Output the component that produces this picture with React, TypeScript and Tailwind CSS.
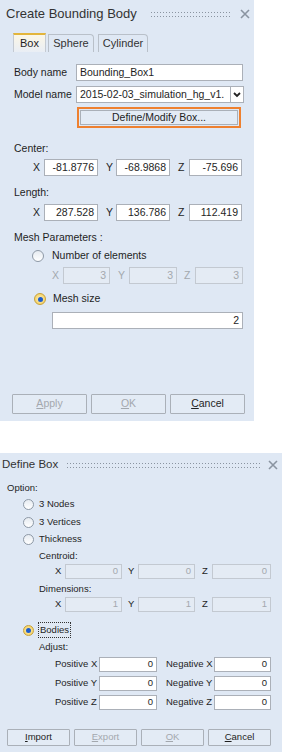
import React from 'react';

const font = "font-['Liberation_Sans',Arial,sans-serif]";

function Grip({ w }: { w: number }) {
  return (
    <svg width={w} height={7} className="shrink-0">
      <defs>
        <pattern id={`g${w}`} width="3" height="4" patternUnits="userSpaceOnUse">
          <rect x="0" y="1" width="1" height="1" fill="#8a94a1" />
        </pattern>
      </defs>
      <rect x="0" y="0" width={w} height="7" fill={`url(#g${w})`} />
    </svg>
  );
}

function CloseX() {
  return (
    <svg width="10" height="10" viewBox="0 0 10 10" className="shrink-0">
      <path d="M1 1 L9 9 M9 1 L1 9" stroke="#8a94a1" strokeWidth="1.6" />
    </svg>
  );
}

function Radio({ on, big }: { on?: boolean; big?: boolean }) {
  const size = big ? 'w-[12px] h-[12px]' : 'w-[11px] h-[11px]';
  if (on)
    return (
      <span
        className={`${size} shrink-0 rounded-full border border-[#c8a23a] bg-[radial-gradient(circle,#fff3bf,#f0c64a)] flex items-center justify-center`}
      >
        <span className="w-[5px] h-[5px] rounded-full bg-[#1d5ccc]" />
      </span>
    );
  return (
    <span
      className={`${size} shrink-0 rounded-full border border-[#8e99a6] bg-[linear-gradient(#e6ebf1,#ffffff)]`}
    />
  );
}

function Field({ v, w, h = 'h-[17px]', off }: { v: string; w: string; h?: string; off?: boolean }) {
  return (
    <div
      className={`${w} ${h} shrink-0 border flex items-center justify-end pr-[3px] ${
        off ? 'border-[#c3c9d1] bg-[#e4ebf4] text-[#a3a8ae]' : 'border-[#abb0b8] bg-white text-[#1e1e1e]'
      }`}
    >
      {v}
    </div>
  );
}

function Btn({ children, off, w, h }: { children: React.ReactNode; off?: boolean; w: string; h: string }) {
  return (
    <div
      className={`${w} ${h} border border-[#aab0b8] rounded-[1px] bg-[#e3ebf5] flex items-center justify-center ${
        off ? 'text-[#a3a8ae]' : 'text-[#1e1e1e]'
      }`}
    >
      {children}
    </div>
  );
}

function XYZ({ vals }: { vals: string[] }) {
  return (
    <div className="flex items-center h-[17px] pl-[19px]">
      <span className="w-[11px]">X</span>
      <Field v={vals[0]} w="w-[54px]" />
      <span className="ml-[8px] w-[10px]">Y</span>
      <Field v={vals[1]} w="w-[54px]" />
      <span className="ml-[8px] w-[11px]">Z</span>
      <Field v={vals[2]} w="w-[53px]" />
    </div>
  );
}

function SmallXYZ({ v }: { v: string }) {
  return (
    <div className="flex items-center h-[15px] pl-[55px]">
      <span className="w-[10px]">X</span>
      <Field v={v} w="w-[57px]" h="h-[15px]" off />
      <span className="ml-[6px] w-[10px]">Y</span>
      <Field v={v} w="w-[57px]" h="h-[15px]" off />
      <span className="ml-[7px] w-[10px]">Z</span>
      <Field v={v} w="w-[59px]" h="h-[15px]" off />
    </div>
  );
}

function AdjustRow({ axis }: { axis: string }) {
  return (
    <div className="flex items-center h-[15px] pl-[55px] mt-[4px]">
      <span className="w-[44px] whitespace-nowrap">Positive {axis}</span>
      <Field v="0" w="w-[58px]" h="h-[15px]" />
      <span className="ml-[9px] w-[48px] whitespace-nowrap">Negative {axis}</span>
      <Field v="0" w="w-[57px]" h="h-[15px]" />
    </div>
  );
}

export default function App() {
  return (
    <div className={`${font} bg-white w-[282px] h-[752px] flex flex-col`}>
      {/* Create Bounding Body */}
      <div className="w-[254px] h-[421px] bg-[#dfe8f4] flex flex-col text-[10.5px] text-[#1e1e1e]">
        <div className="h-[28px] flex items-center pl-[6px] pr-[4px]">
          <span className="text-[13px] text-[#333] whitespace-nowrap">Create Bounding Body</span>
          <span className="ml-auto mr-[9px]">
            <Grip w={80} />
          </span>
          <CloseX />
        </div>

        <div className="mt-[5px] h-[19px] pl-[13px] flex items-end gap-[2px] text-[11px]">
          <div className="w-[33px] h-[19px] border-t-2 border-t-[#e3b53b] border-x border-x-[#c4cad2] bg-[linear-gradient(#fbf6e6,#e9eef5)] flex items-center justify-center">
            Box
          </div>
          <div className="w-[46px] h-[18px] border-t border-x border-[#b9c0c9] rounded-tr-[4px] flex items-center justify-center text-[#333]">
            Sphere
          </div>
          <div className="ml-[2px] w-[50px] h-[18px] border-t border-x border-[#b9c0c9] rounded-tr-[4px] flex items-center justify-center text-[#333]">
            Cylinder
          </div>
        </div>

        <div className="pl-[14px] flex flex-col">
          <div className="mt-[12px] h-[17px] flex items-center">
            <span className="w-[62px] whitespace-nowrap">Body name</span>
            <div className="w-[167px] h-[17px] border border-[#abb0b8] bg-white flex items-center pl-[3px]">
              Bounding_Box1
            </div>
          </div>
          <div className="mt-[5px] h-[17px] flex items-center">
            <span className="w-[62px] whitespace-nowrap">Model name</span>
            <div className="w-[155px] h-[17px] border border-[#abb0b8] bg-white flex items-center pl-[3px] overflow-hidden whitespace-nowrap">
              2015-02-03_simulation_hg_v1.
            </div>
            <div className="w-[13px] h-[17px] border border-l-0 border-[#abb0b8] bg-white flex items-center justify-center">
              <svg width="8" height="6" viewBox="0 0 8 6">
                <path d="M1 1 L4 4 L7 1" stroke="#222" strokeWidth="1.8" fill="none" />
              </svg>
            </div>
          </div>
          <div className="mt-[4px] ml-[63px] w-[164px] h-[21px] border-2 border-[#ee802f] p-[1px]">
            <div className="h-full border border-[#aab0b8] bg-[#e3ebf5] flex items-center justify-center">
              Define/Modify Box...
            </div>
          </div>

          <div className="mt-[14px] h-[14px] flex items-center">Center:</div>
          <div className="mt-[3px]">
            <XYZ vals={['-81.8776', '-68.9868', '-75.696']} />
          </div>
          <div className="mt-[10px] h-[14px] flex items-center">Length:</div>
          <div className="mt-[4px]">
            <XYZ vals={['287.528', '136.786', '112.419']} />
          </div>
          <div className="mt-[10px] h-[14px] flex items-center">Mesh Parameters :</div>
          <div className="mt-[4px] h-[14px] flex items-center pl-[18px] gap-[8px]">
            <Radio big />
            <span>Number of elements</span>
          </div>
          <div className="mt-[4px] h-[17px] flex items-center pl-[38px] text-[#a3a8ae]">
            <span className="w-[11px]">X</span>
            <Field v="3" w="w-[47px]" off />
            <span className="ml-[8px] w-[11px]">Y</span>
            <Field v="3" w="w-[48px]" off />
            <span className="ml-[7px] w-[11px]">Z</span>
            <Field v="3" w="w-[48px]" off />
          </div>
          <div className="mt-[8px] h-[14px] flex items-center pl-[20px] gap-[7px]">
            <Radio on big />
            <span>Mesh size</span>
          </div>
          <div className="mt-[6px] ml-[38px]">
            <Field v="2" w="w-[191px]" />
          </div>
        </div>

        <div className="mt-auto mb-[7px] pl-[12px] flex gap-[4px]">
          <Btn w="w-[75px]" h="h-[20px]" off>
            <span>
              <u>A</u>pply
            </span>
          </Btn>
          <Btn w="w-[75px]" h="h-[20px]" off>
            <span>
              <u>O</u>K
            </span>
          </Btn>
          <Btn w="w-[75px]" h="h-[20px]">
            <span>
              <u>C</u>ancel
            </span>
          </Btn>
        </div>
      </div>

      {/* Define Box */}
      <div className="mt-[32px] w-[282px] flex-1 bg-[#dfe8f4] flex flex-col text-[9.5px] text-[#1e1e1e]">
        <div className="h-[24px] flex items-center pl-[2px] pr-[4px]">
          <span className="text-[11.5px] text-[#333] whitespace-nowrap">Define Box</span>
          <span className="ml-auto mr-[6px]">
            <Grip w={195} />
          </span>
          <CloseX />
        </div>

        <div className="mt-[5px] h-[12px] flex items-center pl-[7px]">Option:</div>
        <div className="mt-[3px] h-[14px] flex items-center pl-[23px] gap-[5px]">
          <Radio />
          <span>3 Nodes</span>
        </div>
        <div className="mt-[4px] h-[14px] flex items-center pl-[23px] gap-[5px]">
          <Radio />
          <span>3 Vertices</span>
        </div>
        <div className="mt-[3px] h-[14px] flex items-center pl-[23px] gap-[5px]">
          <Radio />
          <span>Thickness</span>
        </div>
        <div className="mt-[4px] h-[12px] flex items-center pl-[39px]">Centroid:</div>
        <div className="mt-[2px]">
          <SmallXYZ v="0" />
        </div>
        <div className="mt-[4px] h-[12px] flex items-center pl-[39px]">Dimensions:</div>
        <div className="mt-[2px]">
          <SmallXYZ v="1" />
        </div>

        <div className="mt-[10px] h-[16px] flex items-center pl-[23px] gap-[4px]">
          <Radio on />
          <span className="h-[16px] px-[1px] border border-dotted border-[#333] flex items-center">Bodies</span>
        </div>
        <div className="mt-[3px] h-[12px] flex items-center pl-[39px]">Adjust:</div>
        <AdjustRow axis="X" />
        <AdjustRow axis="Y" />
        <AdjustRow axis="Z" />

        <div className="mt-auto mb-[6px] pl-[7px] flex gap-[4px]">
          <Btn w="w-[63px]" h="h-[17px]">
            <span>
              <u>I</u>mport
            </span>
          </Btn>
          <Btn w="w-[63px]" h="h-[17px]" off>
            <span>
              <u>E</u>xport
            </span>
          </Btn>
          <Btn w="w-[63px]" h="h-[17px]" off>
            <span>
              <u>O</u>K
            </span>
          </Btn>
          <Btn w="w-[63px]" h="h-[17px]">
            <span>
              <u>C</u>ancel
            </span>
          </Btn>
        </div>
      </div>
    </div>
  );
}
